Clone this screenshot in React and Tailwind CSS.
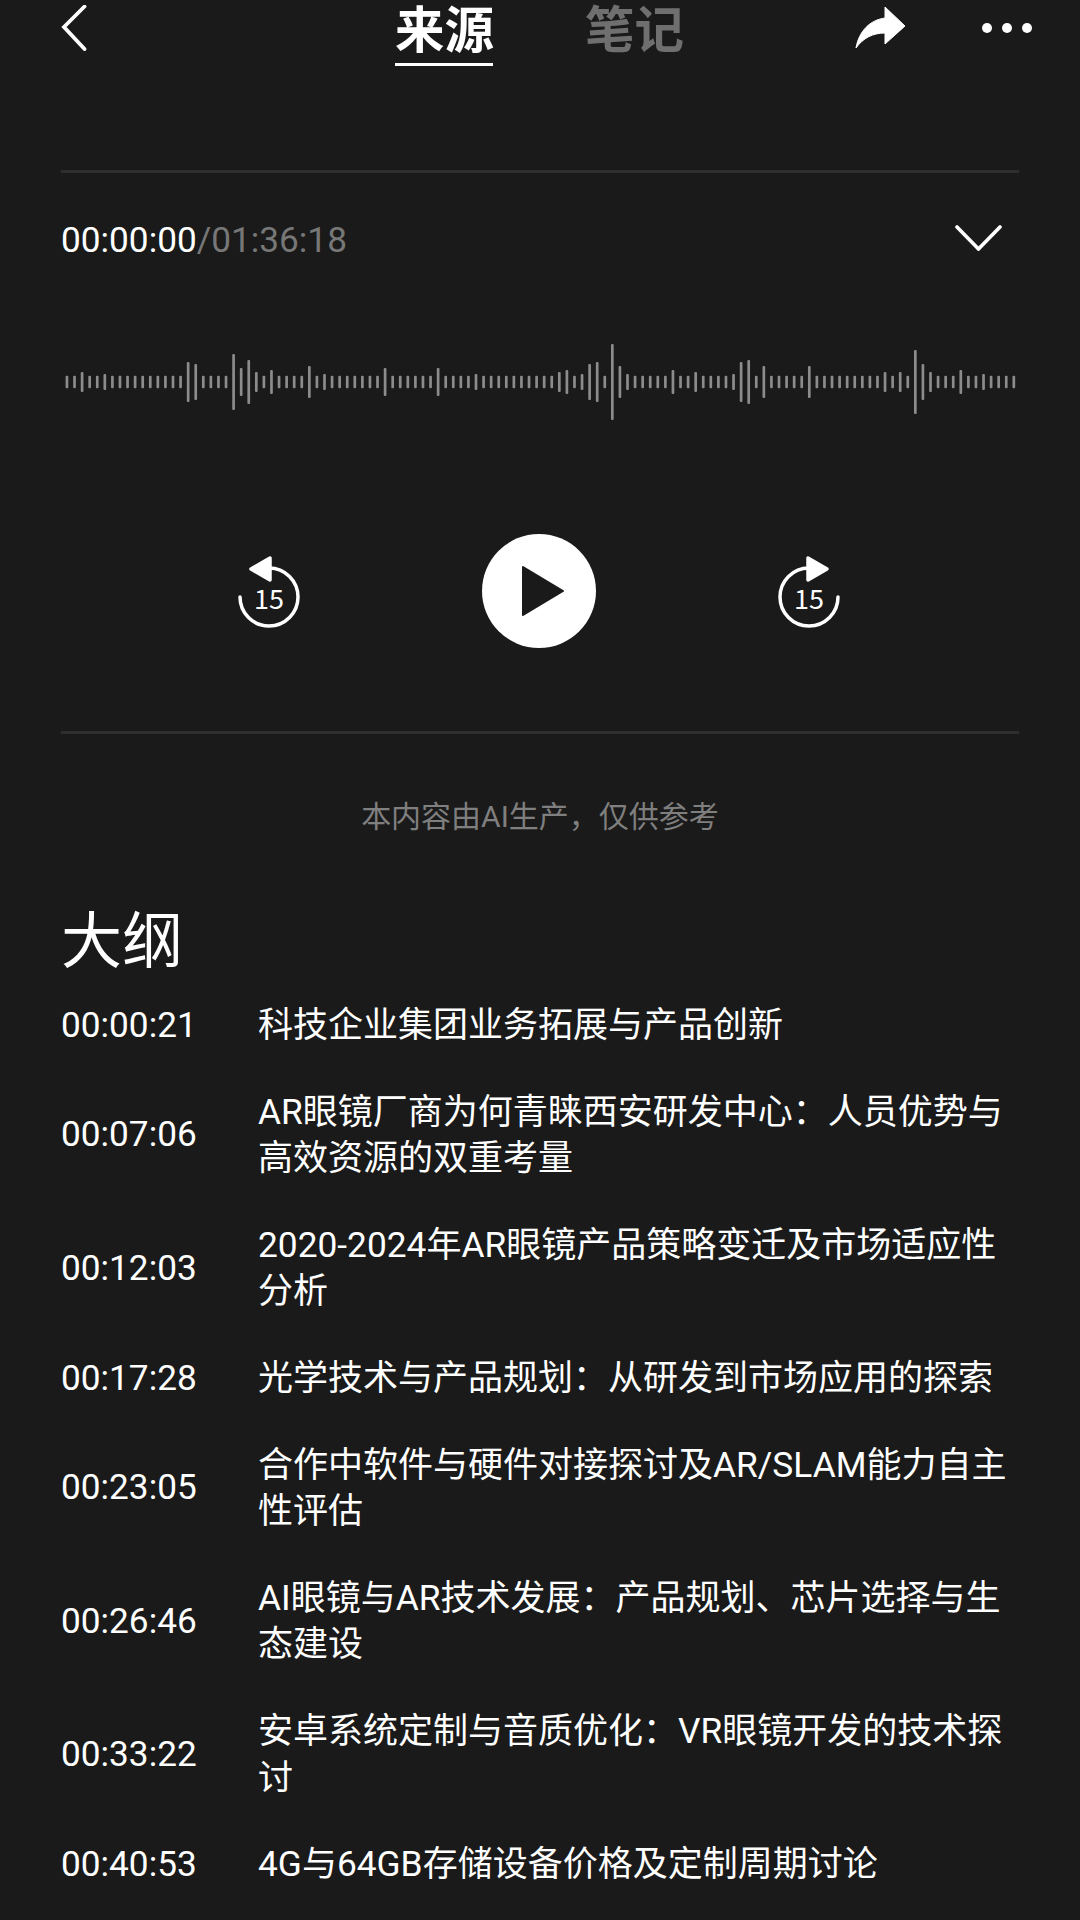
const bars = [
  ...[38,38,60,38,38,48], ...Array(10).fill(38), 120,108, ...Array(4).fill(38), 168,84,132,60,38,72, ...Array(4).fill(38), 96,38,48,
  ...Array(7).fill(38), 84, ...Array(6).fill(38), 84, ...Array(4).fill(38), 48, ...Array(9).fill(38),
  38,60,72,38,48,108,120,38,228,96,48, ...Array(5).fill(38), 72,38,38,60, ...Array(4).fill(38), 48,120,132,38,96, ...Array(5).fill(38), 96,
  ...Array(9).fill(38), 60,38,60,38,192,108,60,38,38,38,72,38,38,48,38,38,38,38,
];

const outline = [
  ["00:00:21", "科技企业集团业务拓展与产品创新"],
  ["00:07:06", "AR眼镜厂商为何青睐西安研发中心：人员优势与高效资源的双重考量"],
  ["00:12:03", "2020-2024年AR眼镜产品策略变迁及市场适应性分析"],
  ["00:17:28", "光学技术与产品规划：从研发到市场应用的探索"],
  ["00:23:05", "合作中软件与硬件对接探讨及AR/SLAM能力自主性评估"],
  ["00:26:46", "AI眼镜与AR技术发展：产品规划、芯片选择与生态建设"],
  ["00:33:22", "安卓系统定制与音质优化：VR眼镜开发的技术探讨"],
  ["00:40:53", "4G与64GB存储设备价格及定制周期讨论"],
];

function Mixed({ text }) {
  return text.split(/([A-Za-z0-9/-]+)/).map((part, i) =>
    i % 2 ? <span key={i} className="text-[35.3px] leading-none">{part}</span> : part
  );
}

function Skip({ flip }) {
  return (
    <svg width="68" height="78" viewBox="0 0 68 78" className="block">
      <g transform={flip ? "translate(68,0) scale(-1,1)" : undefined}>
        <path d="M34 16 A29 29 0 1 1 5 45" fill="none" stroke="#fff" strokeWidth="3.5" strokeLinecap="round" />
        <path d="M35 6 L35 28 L16 17 Z" fill="#fff" stroke="#fff" strokeWidth="3.5" strokeLinejoin="round" />
      </g>
      <text x="34" y="57" textAnchor="middle" fill="#fff" fontSize="27" fontFamily="'Noto Sans CJK SC', sans-serif">15</text>
    </svg>
  );
}

export default function App() {
  return (
    <div className="h-[1920px] overflow-hidden bg-[#1a1a1a] px-[61px] text-white font-['Roboto','Noto_Sans_CJK_SC',sans-serif]">
      <header className="flex h-[170px] items-start">
        <svg width="28" height="46" viewBox="0 0 28 46" className="mt-[5px] shrink-0">
          <path d="M23.5 2.5 L3 23 L23.5 45" transform="translate(0,-1)" fill="none" stroke="#fff" strokeWidth="3.8" strokeLinecap="round" strokeLinejoin="miter" />
        </svg>
        <div className="ml-[306px] w-[98px] border-b-[3px] border-white text-center text-[49.5px] leading-[63px] font-bold whitespace-nowrap">来源</div>
        <div className="ml-[92px] w-[98px] text-center text-[49.5px] leading-[63px] font-bold whitespace-nowrap text-[#6f6f6f]">笔记</div>
        <svg width="52" height="44" viewBox="0 0 52 44" className="mt-[6px] ml-[172px] shrink-0">
          <path d="M1 42 C4 25 15 14 30 12 L30 1 L50 20 L30 38 L30 27 C18 27 8 32 1 42 Z" fill="#fff" stroke="#fff" strokeWidth="1" strokeLinejoin="round" />
        </svg>
        <svg width="52" height="12" viewBox="0 0 52 12" className="mt-[22px] ml-[74px] shrink-0 -mr-[60px]">
          <circle cx="6" cy="6" r="5" fill="#fff" />
          <circle cx="26" cy="6" r="5" fill="#fff" />
          <circle cx="46" cy="6" r="5" fill="#fff" />
        </svg>
      </header>

      <div className="h-[3px] bg-[#2e2e2e]" />

      <div className="flex items-center justify-between pt-[44px] pr-[17px]">
        <div className="text-[35.2px] leading-[46px]">
          <span>00:00:00</span><span className="text-[#777777]">/01:36:18</span>
        </div>
        <svg width="47" height="26" viewBox="0 0 47 26" className="-mt-[5px]">
          <path d="M2 2 L23.5 24 L45 2" fill="none" stroke="#fff" strokeWidth="3.6" strokeLinecap="round" />
        </svg>
      </div>

      <svg width="958" height="78" viewBox="0 0 958 78" className="mt-[80px] block">
        {bars.map((h, i) => (
          <rect key={i} x={4.6 + i * 7.575} y={39 - h / 6} width="2.7" height={h / 3} rx="1" fill="#8c8c8c" />
        ))}
      </svg>

      <div className="mt-[113px] mr-[2px] flex items-center justify-center gap-[179px]">
        <Skip />
        <div className="flex h-[114px] w-[114px] items-center justify-center rounded-full bg-white">
          <svg width="44" height="52" viewBox="0 0 44 52" className="ml-[8px]">
            <path d="M2 2 L42 26 L2 50 Z" fill="#1a1a1a" stroke="#1a1a1a" strokeWidth="2" strokeLinejoin="round" />
          </svg>
        </div>
        <Skip flip />
      </div>

      <div className="mt-[83px] h-[3px] bg-[#2e2e2e]" />

      <p className="mt-[63px] text-center text-[30px] leading-[40px] text-[#7f7f7f]">本内容由AI生产，仅供参考</p>

      <h2 className="mt-[65px] text-[61px] leading-[80px] font-normal">大纲</h2>

      <ul className="mt-[1px]">
        {outline.map(([t, s]) => (
          <li key={t} className="flex items-center py-[20.08px] text-[35px] leading-[46.5px]">
            <span className="-mt-[3px] w-[197px] shrink-0 text-[35.2px]">{t}</span>
            <span className="flex-1"><Mixed text={s} /></span>
          </li>
        ))}
      </ul>
    </div>
  );
}
